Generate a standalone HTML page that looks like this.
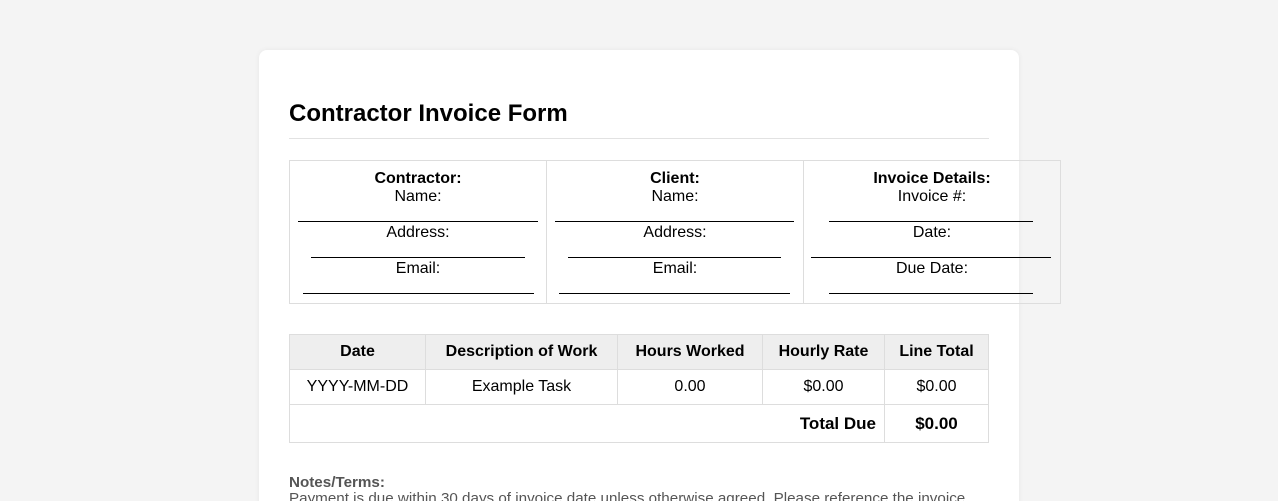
<!DOCTYPE html>
<html style="height:501px;overflow:hidden"><head><style>
body{margin:0;background:#f4f4f4;font-family:"Liberation Sans",Arial,sans-serif;width:1278px;height:501px;overflow:hidden;position:relative}
.card{position:absolute;left:259px;top:50px;width:760px;height:520px;background:#fff;border-radius:8px;box-shadow:0 0 6px rgba(0,0,0,0.06)}
h1{position:absolute;left:289px;top:100px;margin:0;font-size:24px;font-weight:bold;color:#000}
.hr{position:absolute;left:289px;top:138px;width:700px;height:1px;background:#e2e2e2}
.info{position:absolute;left:289px;top:160px;border-collapse:collapse}
.info td{border:1px solid #ddd;width:257px;min-width:257px;max-width:257px;box-sizing:border-box;height:143px;padding:0;position:relative;vertical-align:top;font-size:16px;text-align:center}
.t{position:absolute;left:0;right:0;line-height:18px}
.l{position:absolute;height:1px;background:#000}
.items{position:absolute;left:289px;top:334px;border-collapse:collapse;font-size:16px}
.items td,.items th{border:1px solid #ddd;text-align:center;padding:0}
.items th{background:#eee;height:34px}
.items td{height:34px}
.notes{position:absolute;left:289px;top:475px;font-size:15.2px;color:#555;line-height:16px}
</style></head><body>
<div class="card"></div>
<h1>Contractor Invoice Form</h1>
<div class="hr"></div>
<table class="info"><tr>
<td><div class="t" style="top:9px"><b>Contractor:</b></div><div class="t" style="top:27px">Name:</div><div class="l" style="left:8px;width:240px;top:60px"></div><div class="t" style="top:63px">Address:</div><div class="l" style="left:21px;width:214px;top:96px"></div><div class="t" style="top:99px">Email:</div><div class="l" style="left:13px;width:231px;top:132px"></div></td>
<td><div class="t" style="top:9px"><b>Client:</b></div><div class="t" style="top:27px">Name:</div><div class="l" style="left:8px;width:239px;top:60px"></div><div class="t" style="top:63px">Address:</div><div class="l" style="left:21px;width:213px;top:96px"></div><div class="t" style="top:99px">Email:</div><div class="l" style="left:12px;width:231px;top:132px"></div></td>
<td><div class="t" style="top:9px"><b>Invoice Details:</b></div><div class="t" style="top:27px">Invoice #:</div><div class="l" style="left:25px;width:204px;top:60px"></div><div class="t" style="top:63px">Date:</div><div class="l" style="left:7px;width:240px;top:96px"></div><div class="t" style="top:99px">Due Date:</div><div class="l" style="left:25px;width:204px;top:132px"></div></td>
</tr></table>
<table class="items">
<tr><th style="width:135px">Date</th><th style="width:191px">Description of Work</th><th style="width:144px">Hours Worked</th><th style="width:121px">Hourly Rate</th><th style="width:103px">Line Total</th></tr>
<tr><td>YYYY-MM-DD</td><td>Example Task</td><td>0.00</td><td>$0.00</td><td>$0.00</td></tr>
<tr><td colspan="4" style="text-align:right;padding-right:8px;height:37px;font-size:17px"><b>Total Due</b></td><td style="font-size:17px"><b>$0.00</b></td></tr>
</table>
<div class="notes"><b>Notes/Terms:</b><br>Payment is due within 30 days of invoice date unless otherwise agreed. Please reference the invoice</div>
</body></html>
